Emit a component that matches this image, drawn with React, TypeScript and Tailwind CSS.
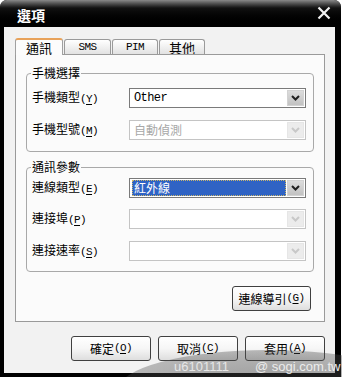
import React from "react";

const CJK = "font-['Noto_Sans_CJK_TC','Noto_Sans_CJK_SC',sans-serif]";

function Acc({ k }: { k: string }) {
  return (
    <span className="font-['Liberation_Mono',monospace] text-[11px] tracking-[-0.6px]">
      (<span className="underline underline-offset-[2px]">{k}</span>)
    </span>
  );
}

function Chevron({ color }: { color: string }) {
  return (
    <svg width="9" height="6" viewBox="0 0 9 6">
      <path d="M1 1 L4.5 4.5 L8 1" fill="none" stroke={color} strokeWidth="2" />
    </svg>
  );
}

function Select({
  value,
  disabled,
  highlighted,
}: {
  value?: string;
  disabled?: boolean;
  highlighted?: boolean;
}) {
  return (
    <div
      className={`w-[177px] h-[20px] border bg-white flex items-stretch p-[1px] ${
        disabled ? "border-[#c4c4c4]" : "border-[#7a7a7a]"
      }`}
    >
      <div className="flex-1 flex items-center min-w-0">
        {highlighted ? (
          <div className="ml-[1px] mr-[1px] h-[16px] w-full bg-[#2f63c4] border border-dotted border-[#c9b56a] flex items-center pl-[1px] text-white text-[12px] leading-none">
            {value}
          </div>
        ) : (
          <span
            className={`pl-[3px] text-[12px] leading-none ${
              disabled ? "text-[#a8a8a8]" : "text-black font-['Liberation_Mono',monospace] text-[11px] tracking-[-0.6px]"
            }`}
          >
            {value}
          </span>
        )}
      </div>
      <div
        className={`w-[17px] flex items-center justify-center border ${
          disabled
            ? "bg-[#ececec] border-[#e6e6e6]"
            : "bg-gradient-to-b from-[#dcdcdc] to-[#c2c2c2] border-[#d2d2d2]"
        }`}
      >
        <Chevron color={disabled ? "#c8c8c8" : "#202020"} />
      </div>
    </div>
  );
}

function Row({
  label,
  k,
  children,
}: {
  label: string;
  k: string;
  children: React.ReactNode;
}) {
  return (
    <div className="flex items-center h-[20px]">
      <div className="w-[97px] text-[12px] leading-none text-black whitespace-nowrap">
        {label}
        <Acc k={k} />
      </div>
      {children}
    </div>
  );
}

function Btn({ label, k, w = 80 }: { label: string; k: string; w?: number }) {
  return (
    <button
      className={`h-[25px] rounded-[3px] border border-[#404040] bg-gradient-to-b from-[#ffffff] via-[#f6f6f6] to-[#dedede] text-[12px] leading-none text-black flex items-center justify-center ${
        w === 80 ? "w-[80px]" : "w-[79px]"
      }`}
    >
      {label}
      <Acc k={k} />
    </button>
  );
}

function Tab({
  label,
  selected,
  mono,
  w,
}: {
  label: string;
  selected?: boolean;
  mono?: boolean;
  w: string;
}) {
  return (
    <div
      className={`${w} flex items-center justify-center rounded-t-[3px] border border-b-0 ${
        selected
          ? "h-[17px] -mb-[1px] bg-[#fcfcfc] border-[#a0a0a0] border-t-[2px] border-t-[#e8a25a] relative z-10"
          : "h-[15px] bg-gradient-to-b from-[#ffffff] to-[#e2e2e2] border-[#9a9a9a]"
      }`}
    >
      <span
        className={
          mono
            ? "font-['Liberation_Mono',monospace] text-[11px] tracking-[-0.6px] leading-none"
            : "text-[13px] leading-none"
        }
      >
        {label}
      </span>
    </div>
  );
}

export default function App() {
  return (
    <div className={`w-[342px] h-[377px] bg-white relative overflow-hidden ${CJK}`}>
      <div className="w-[341px] h-[377px] flex flex-col rounded-t-[7px] overflow-hidden bg-black">
        {/* Title bar */}
        <div className="h-[27px] shrink-0 flex items-center justify-between pl-[17px] pr-[10px] bg-gradient-to-b from-[#8a8a8a] via-[#111111] via-[30%] to-[#000000]">
          <span className="text-white font-bold text-[14px] leading-none mt-[2px]">選項</span>
          <svg width="14" height="14" viewBox="0 0 14 14" className="mt-[-1px]">
            <path d="M1.5 1.5 L12.5 12.5 M12.5 1.5 L1.5 12.5" stroke="#f2f2f2" strokeWidth="2.2" />
          </svg>
        </div>
        {/* Body */}
        <div className="flex-1 border-l-[4px] border-r-[6px] border-b-[4px] border-black bg-[#f2f2f2] flex flex-col pt-[10px] pl-[11px] pr-[10px]">
          {/* Tabs */}
          <div className="flex items-end h-[17px] gap-[1px]">
            <Tab label="通訊" selected w="w-[48px]" />
            <Tab label="SMS" mono w="w-[47px]" />
            <Tab label="PIM" mono w="w-[46px]" />
            <Tab label="其他" w="w-[46px]" />
          </div>
          {/* Panel */}
          <div className="w-[310px] h-[268px] border border-[#9a9a9a] bg-[#fbfbfb] flex flex-col pt-[10px] px-[10px]">
            <fieldset className="border border-[#a9a9a9] rounded-[4px] pl-[5px] pr-[6px] pt-[7px] pb-[11px]">
              <legend className="text-[12px] leading-[16px] text-black px-[1px] -ml-[1px]">手機選擇</legend>
              <div className="flex flex-col gap-[12px]">
                <Row label="手機類型" k="Y">
                  <Select value="Other" />
                </Row>
                <Row label="手機型號" k="M">
                  <Select value="自動偵測" disabled />
                </Row>
              </div>
            </fieldset>
            <fieldset className="mt-[7px] border border-[#a9a9a9] rounded-[4px] pl-[5px] pr-[6px] pt-[3px] pb-[10px]">
              <legend className="text-[12px] leading-[16px] text-black px-[1px] -ml-[1px]">通訊參數</legend>
              <div className="flex flex-col">
                <Row label="連線類型" k="E">
                  <Select value="紅外線" highlighted />
                </Row>
                <div className="mt-[11px]">
                  <Row label="連接埠" k="P">
                    <Select disabled />
                  </Row>
                </div>
                <div className="mt-[12px]">
                  <Row label="連接速率" k="S">
                    <Select disabled />
                  </Row>
                </div>
              </div>
            </fieldset>
            <div className="flex justify-end mt-[14px] pr-[3px]">
              <Btn label="連線導引" k="G" w={79} />
            </div>
          </div>
          {/* Bottom buttons */}
          <div className="flex justify-end gap-[7px] mt-[14px] w-[310px]">
            <Btn label="確定" k="O" />
            <Btn label="取消" k="C" />
            <Btn label="套用" k="A" />
          </div>
        </div>
      </div>
      {/* Watermark overlay */}
      <div className="absolute left-[118px] top-[350px] w-[300px] h-[80px] rounded-[50%] bg-[radial-gradient(ellipse_at_center,rgba(60,60,60,0.5),rgba(90,90,90,0.3))] pointer-events-none" />
      <div className="absolute left-[174px] top-[360px] text-[13px] leading-none whitespace-nowrap text-[#e6e6e6] font-['Liberation_Sans',sans-serif] pointer-events-none">
        u6101111
      </div>
      <div className="absolute left-[255px] top-[360px] text-[13px] leading-none whitespace-nowrap text-[#ececec] font-['Liberation_Sans',sans-serif] pointer-events-none">
        @ sogi.com.tw
      </div>
    </div>
  );
}
